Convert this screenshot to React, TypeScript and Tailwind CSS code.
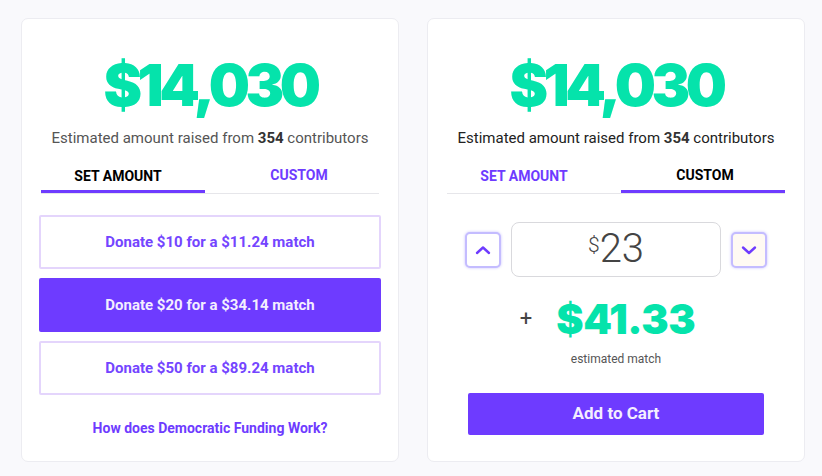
import { useState } from "react";

const TOTAL = "$14,030";
const CONTRIBUTORS = 354;

const OPTIONS = [
  { give: 10, match: "11.24" },
  { give: 20, match: "34.14" },
  { give: 50, match: "89.24" },
];

type TabsProps = {
  active: "set" | "custom";
};

const Tabs = ({ active }: TabsProps) => {
  return (
    <div className="mt-[16px] mx-[2px] flex justify-between border-b border-[#e6e6ea]">
      <div className="w-[164px] flex flex-col items-center">
        <span
          className={`pr-[10px] h-[26px] pt-[4px] text-[14px] font-bold leading-[16px] ${
            active === "set" ? "text-black" : "text-[#6e3bff]"
          }`}
        >
          SET AMOUNT
        </span>
        <div className={`w-full h-[3px] ${active === "set" ? "bg-[#6e3bff]" : "bg-transparent"}`}></div>
      </div>
      <div className="w-[164px] flex flex-col items-center">
        <span
          className={`pl-[4px] h-[26px] pt-[3px] text-[14px] font-bold leading-[16px] ${
            active === "custom" ? "text-black" : "text-[#6e3bff]"
          }`}
        >
          CUSTOM
        </span>
        <div className={`w-full h-[3px] ${active === "custom" ? "bg-[#6e3bff]" : "bg-transparent"}`}></div>
      </div>
    </div>
  );
};

const Header = ({ dark }: { dark?: boolean }) => {
  return (
    <>
      <h1 className="text-center text-[58px] leading-[60px] font-black tracking-[-4.5px] text-[#05e3ab] font-['Inter',sans-serif]">
        {TOTAL}
      </h1>
      <p className={`mt-[13px] text-center text-[15px] leading-[20px] ${dark ? "text-[#222]" : "text-[#555]"}`}>
        Estimated amount raised from <b className="font-bold text-[#333]">{CONTRIBUTORS}</b> contributors
      </p>
    </>
  );
};

const App = () => {
  const [picked, setPicked] = useState(1);
  const [amount, setAmount] = useState(23);

  return (
    <div className="h-[476px] w-[822px] bg-[#f9f9fc] flex gap-[28px] pl-[21px] pt-[18px] font-['Roboto',sans-serif]">
      {/* set amount card */}
      <section className="w-[378px] h-[444px] bg-white rounded-[7px] border border-[#ececf1] px-[17px] pt-[36px]">
        <Header />
        <Tabs active="set" />

        <div className="mt-[21px] flex flex-col gap-[9px]">
          {OPTIONS.map((o, i) => (
            <button
              key={o.give}
              onClick={() => setPicked(i)}
              className={`h-[54px] w-full rounded-[2px] text-[15px] font-bold ${
                picked === i
                  ? "bg-[#6e3bff] text-[#f3eeff] border-2 border-[#6e3bff]"
                  : "bg-white text-[#7445ff] border-2 border-[#e4d5fc]"
              }`}
            >
              Donate ${o.give} for a ${o.match} match
            </button>
          ))}
        </div>

        <p className="mt-[23px] text-center text-[14px] font-bold text-[#6e3bff]">
          How does Democratic Funding Work?
        </p>
      </section>

      {/* custom card */}
      <section className="w-[378px] h-[444px] bg-white rounded-[7px] border border-[#ececf1] px-[17px] pt-[36px]">
        <Header dark />
        <Tabs active="custom" />

        <div className="mt-[28px] flex items-center justify-center gap-[10px]">
          <button
            onClick={() => setAmount((a) => a + 1)}
            className="w-[36px] h-[36px] rounded-[5px] border-[2px] border-[#c4bcff] shadow-[0_0_3px_#c9c2ff] bg-white flex items-center justify-center"
          >
            <svg width="16" height="10" viewBox="0 0 16 10" fill="none">
              <path d="M2 8L8 2.5L14 8" stroke="#6e3bff" strokeWidth="2.4" strokeLinecap="round" strokeLinejoin="round" />
            </svg>
          </button>
          <div className="w-[210px] h-[55px] rounded-[8px] border border-[#d9d9dd] flex items-start justify-center pt-[6px] text-[#444]">
            <span className="text-[21px] leading-[20px] mt-[6px] font-light">$</span>
            <span className="text-[40px] leading-[40px] font-light">{amount}</span>
          </div>
          <button
            onClick={() => setAmount((a) => Math.max(1, a - 1))}
            className="w-[36px] h-[36px] rounded-[5px] border-[2px] border-[#c4bcff] shadow-[0_0_3px_#c9c2ff] bg-[#fffaf3] flex items-center justify-center"
          >
            <svg width="16" height="10" viewBox="0 0 16 10" fill="none">
              <path d="M2 2.5L8 8L14 2.5" stroke="#6e3bff" strokeWidth="2.4" strokeLinecap="round" strokeLinejoin="round" />
            </svg>
          </button>
        </div>

        <div className="mt-[20px] flex items-center justify-center pr-[17px]">
          <span className="text-[22px] leading-[22px] text-[#444] mr-[24px]">+</span>
          <span className="text-[41px] leading-[44px] font-black tracking-[-0.5px] text-[#05e3ab] font-['Inter',sans-serif]">
            $41.33
          </span>
        </div>
        <p className="mt-[9px] text-center text-[12px] text-[#555]">estimated match</p>

        <button className="mt-[25px] mx-auto block w-[296px] h-[42px] rounded-[2px] bg-[#6e3bff] text-[17px] font-bold text-[#f3eeff]">
          Add to Cart
        </button>
      </section>
    </div>
  );
};

export default App;
